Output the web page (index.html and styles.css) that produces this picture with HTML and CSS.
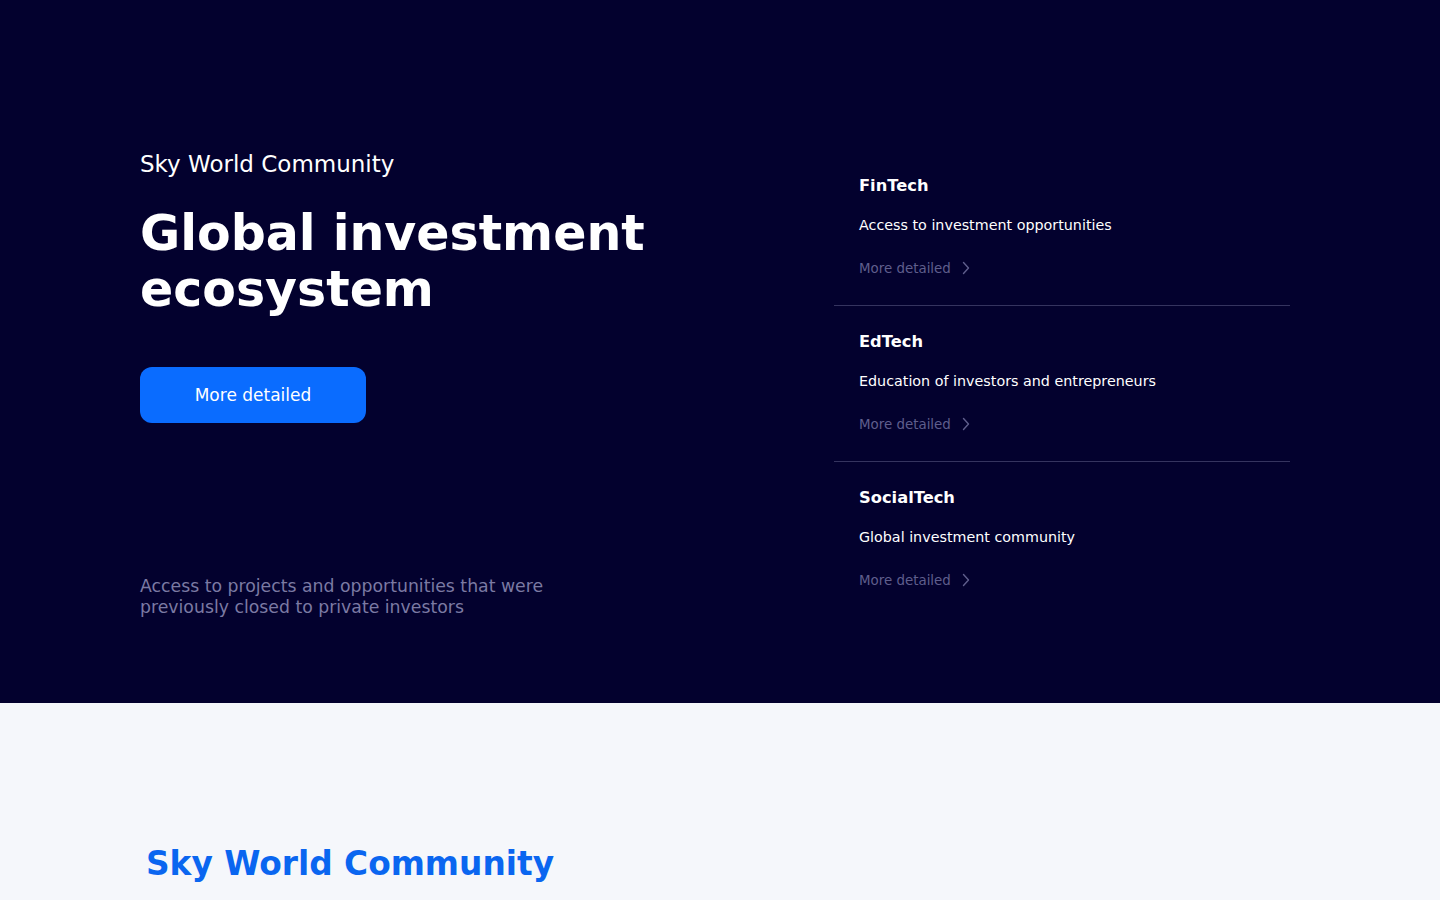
FILE: index.html
```html
<!DOCTYPE html>
<html lang="en">
<head>
<meta charset="utf-8">
<title>Sky World Community</title>
<link rel="stylesheet" href="styles.css">
</head>
<body>
<section class="hero">
  <div class="container hero-inner">
    <div class="hero-left">
      <div class="hero-top">
        <p class="eyebrow">Sky World Community</p>
        <h1 class="headline">Global investment<br>ecosystem</h1>
        <a class="btn" href="#">More detailed</a>
      </div>
      <p class="hero-note">Access to projects and opportunities that were previously closed to private investors</p>
    </div>
    <ul class="cards">
      <li class="card">
        <h3 class="card-title">FinTech</h3>
        <p class="card-text">Access to investment opportunities</p>
        <a class="card-link" href="#">More detailed
          <svg class="chev" viewBox="0 0 10 14" width="10" height="14"><path d="M2.5 1.5 L7.5 7 L2.5 12.5" fill="none" stroke="currentColor" stroke-width="1.4" stroke-linecap="round" stroke-linejoin="round"/></svg>
        </a>
      </li>
      <li class="card">
        <h3 class="card-title">EdTech</h3>
        <p class="card-text">Education of investors and entrepreneurs</p>
        <a class="card-link" href="#">More detailed
          <svg class="chev" viewBox="0 0 10 14" width="10" height="14"><path d="M2.5 1.5 L7.5 7 L2.5 12.5" fill="none" stroke="currentColor" stroke-width="1.4" stroke-linecap="round" stroke-linejoin="round"/></svg>
        </a>
      </li>
      <li class="card">
        <h3 class="card-title">SocialTech</h3>
        <p class="card-text">Global investment community</p>
        <a class="card-link" href="#">More detailed
          <svg class="chev" viewBox="0 0 10 14" width="10" height="14"><path d="M2.5 1.5 L7.5 7 L2.5 12.5" fill="none" stroke="currentColor" stroke-width="1.4" stroke-linecap="round" stroke-linejoin="round"/></svg>
        </a>
      </li>
    </ul>
  </div>
</section>
<section class="about">
  <div class="container">
    <h2 class="about-title">Sky World Community</h2>
  </div>
</section>
</body>
</html>
```
FILE: styles.css
```css
* { box-sizing: border-box; }
html, body { margin: 0; padding: 0; }
body {
  font-family: "DejaVu Sans", "Liberation Sans", sans-serif;
  background: #f5f7fb;
}
.container {
  width: 1160px;
  margin: 0 auto;
}
.hero {
  background: #03012e;
  color: #fff;
  padding: 150px 0 86px;
}
.hero-inner {
  display: flex;
  justify-content: space-between;
}
.hero-left {
  display: flex;
  flex-direction: column;
  justify-content: space-between;
}
.eyebrow {
  margin: 0;
  font-size: 23px;
  line-height: 28px;
  font-weight: normal;
}
.headline {
  margin: 28px 0 0;
  font-size: 49px;
  line-height: 56px;
  font-weight: bold;
}
.btn {
  margin-top: 49px;
  display: flex;
  align-items: center;
  justify-content: center;
  width: 226px;
  height: 56px;
  border-radius: 12px;
  background: #0a6cff;
  color: #fff;
  text-decoration: none;
  font-size: 17px;
}
.hero-note {
  margin: 0 0 -1px;
  width: 420px;
  font-size: 17.3px;
  line-height: 21px;
  color: #7b7aa3;
}
.cards {
  list-style: none;
  margin: 0 10px 0 0;
  padding: 0;
  width: 456px;
}
.card {
  padding: 25px 25px 27px;
  border-bottom: 1px solid #35345f;
}
.card:last-child { border-bottom: none; }
.card-title {
  margin: 0;
  font-size: 16.3px;
  line-height: 22px;
  font-weight: bold;
}
.card-text {
  margin: 18px 0 0;
  font-size: 14.3px;
  line-height: 20px;
}
.card-link {
  margin-top: 23px;
  display: flex;
  align-items: center;
  gap: 10px;
  height: 20px;
  font-size: 13.4px;
  color: #5f5e8c;
  text-decoration: none;
}
.chev { display: block; }
.about {
  background: #f5f7fb;
  padding: 141px 0 60px;
}
.about-title {
  margin: 0 0 0 6px;
  font-size: 32.8px;
  line-height: 40px;
  font-weight: bold;
  color: #0a66f0;
}
```
